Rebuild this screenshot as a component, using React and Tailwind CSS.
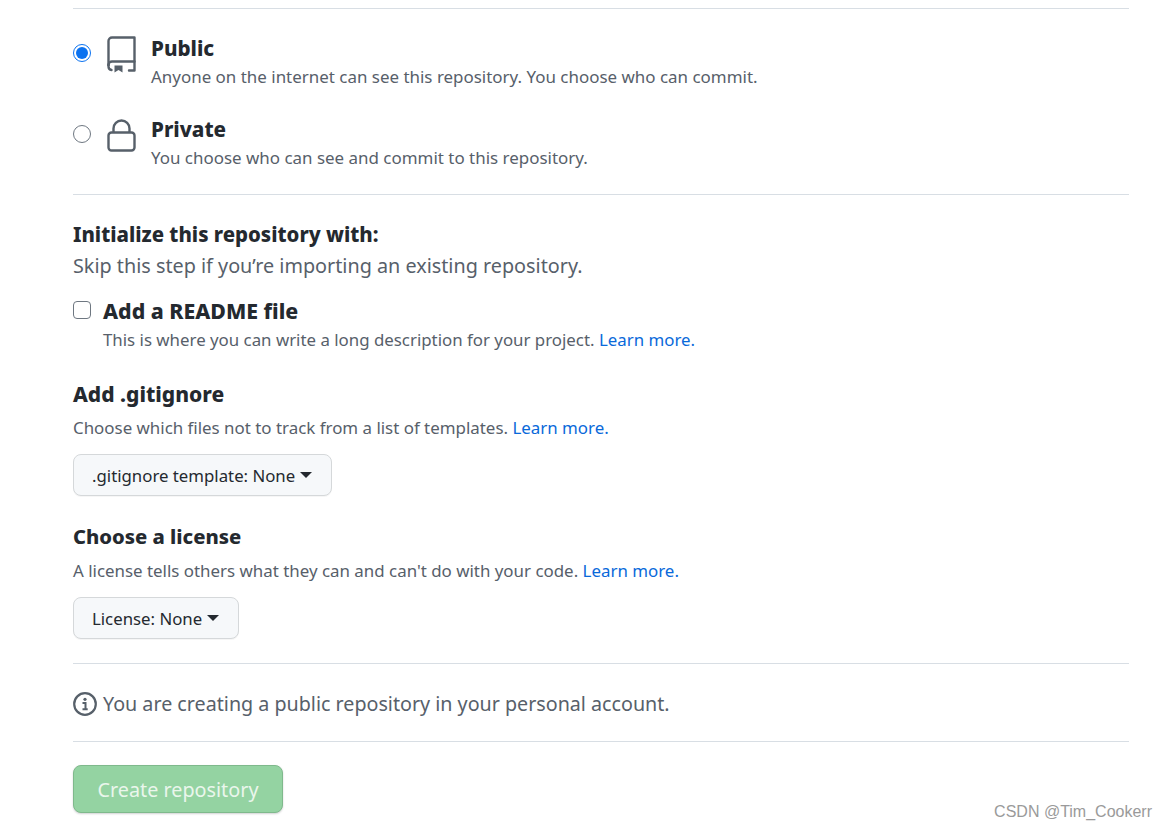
const Hr = () => <div className="h-px bg-[#d8dee4]" />

const Learn = () => <a className="text-[#0969da]">Learn more.</a>

const Select = ({ label }) => (
  <button className="flex items-center h-[42px] px-[18px] bg-[#f6f8fa] border border-[#d5d8da] rounded-lg text-[16.8px] text-[#24292f] shadow-[0_1px_0_rgba(27,31,36,0.04)]">
    <span className="pt-px">{label}</span>
    <span className="ml-[5px] mr-px w-0 h-0 border-x-[6.5px] border-x-transparent border-t-[6px] border-t-[#24292f]" />
  </button>
)

const RepoIcon = () => (
  <svg width="30" height="37" viewBox="0 0 30 37" fill="none" stroke="#57606a" strokeWidth="2.4" strokeLinecap="round" strokeLinejoin="round" className="shrink-0">
    <path d="M1.5 29V5A3.5 3.5 0 0 1 5 1.5H27.5V34.5H22" />
    <path d="M1.5 29A3.5 3.5 0 0 1 5 25.5H27.5" />
    <path d="M1.5 29v1.5A3.5 3.5 0 0 0 4.5 34" />
    <path d="M7.5 29.5h8v7l-4-2.6-4 2.6z" fill="#57606a" stroke="none" />
  </svg>
)

const LockIcon = () => (
  <svg width="30" height="33" viewBox="0 0 30 33" fill="none" stroke="#57606a" strokeWidth="2.4" className="shrink-0">
    <path d="M6.5 14V9.5a8 8 0 0 1 16 0V14" />
    <rect x="1.5" y="13.5" width="26" height="18" rx="3" />
  </svg>
)

const InfoIcon = () => (
  <svg width="24" height="24" viewBox="0 0 24 24" fill="none" className="shrink-0">
    <circle cx="12" cy="12" r="10.8" stroke="#57606a" strokeWidth="2.2" />
    <circle cx="12" cy="7.3" r="1.6" fill="#57606a" />
    <path d="M9.5 11h3v6M9.5 17.2h5.2" stroke="#57606a" strokeWidth="2" />
  </svg>
)

export default function App() {
  return (
    <div className="relative h-[830px] overflow-hidden bg-white px-[73px] pr-[38px] pt-2 text-[#57606a] font-['Noto_Sans','Open_Sans',sans-serif]">
      <Hr />

      <div className="flex mt-7">
        <span className="mt-[7px] w-[18px] h-[18px] rounded-full border border-[#0b72f0] flex items-center justify-center shrink-0">
          <span className="w-3 h-3 rounded-full bg-[#0b72f0]" />
        </span>
        <span className="ml-4 -mt-[1px]"><RepoIcon /></span>
        <div className="ml-[14px] -mt-[1px]">
          <div className="text-[20.6px] leading-[24px] font-extrabold text-[#24292f]">Public</div>
          <div className="mt-[5px] text-[16.95px] leading-[24px]">Anyone on the internet can see this repository. You choose who can commit.</div>
        </div>
      </div>

      <div className="flex mt-[29px]">
        <span className="mt-[7px] w-[18px] h-[18px] rounded-full border border-[#6e7781] bg-white shrink-0" />
        <span className="ml-4 mt-[1px]"><LockIcon /></span>
        <div className="ml-[14px] -mt-[1px]">
          <div className="text-[20.6px] leading-[24px] font-extrabold text-[#24292f]">Private</div>
          <div className="mt-[5px] text-[16.95px] leading-[24px]">You choose who can see and commit to this repository.</div>
        </div>
      </div>

      <div className="mt-6"><Hr /></div>

      <div className="mt-[26px] text-[20.35px] leading-[26px] font-extrabold text-[#24292f]">Initialize this repository with:</div>
      <div className="mt-[6px] text-[19.8px] leading-[26px]">Skip this step if you’re importing an existing repository.</div>

      <div className="flex mt-[19px]">
        <span className="mt-[3px] w-[18px] h-[18px] rounded-[4px] border border-[#6e7781] bg-white shrink-0" />
        <div className="ml-3">
          <div className="text-[21.3px] leading-[26px] font-extrabold text-[#24292f]">Add a README file</div>
          <div className="mt-[4px] text-[16.85px] leading-[24px]">This is where you can write a long description for your project. <Learn /></div>
        </div>
      </div>

      <div className="mt-[29px] text-[21px] leading-[26px] font-extrabold text-[#24292f]">Add .gitignore</div>
      <div className="mt-[9px] text-[16.9px] leading-[24px]">Choose which files not to track from a list of templates. <Learn /></div>
      <div className="flex mt-[14px]"><Select label=".gitignore template: None" /></div>

      <div className="mt-[27px] text-[20.2px] leading-[26px] font-extrabold text-[#24292f]">Choose a license</div>
      <div className="mt-[10px] text-[16.9px] leading-[24px]">A license tells others what they can and can't do with your code. <Learn /></div>
      <div className="flex mt-[14px]"><Select label="License: None" /></div>

      <div className="mt-6"><Hr /></div>

      <div className="flex items-center mt-[27px] text-[19.7px] leading-[26px]">
        <InfoIcon />
        <span className="ml-[6px]">You are creating a public repository in your personal account.</span>
      </div>

      <div className="mt-6"><Hr /></div>

      <button className="mt-[23px] pt-[2px] w-[210px] h-[48px] rounded-lg bg-[#94d3a2] border border-[#7fb98c] text-[19.8px] text-[#eaf6ec] shadow-[0_1px_2px_rgba(27,31,36,0.2)]">Create repository</button>

      <div className="absolute right-[15px] top-[802px] text-[16px] leading-5 text-[#9a9a9a] font-['Liberation_Sans',sans-serif]">CSDN @Tim_Cookerr</div>
    </div>
  )
}
